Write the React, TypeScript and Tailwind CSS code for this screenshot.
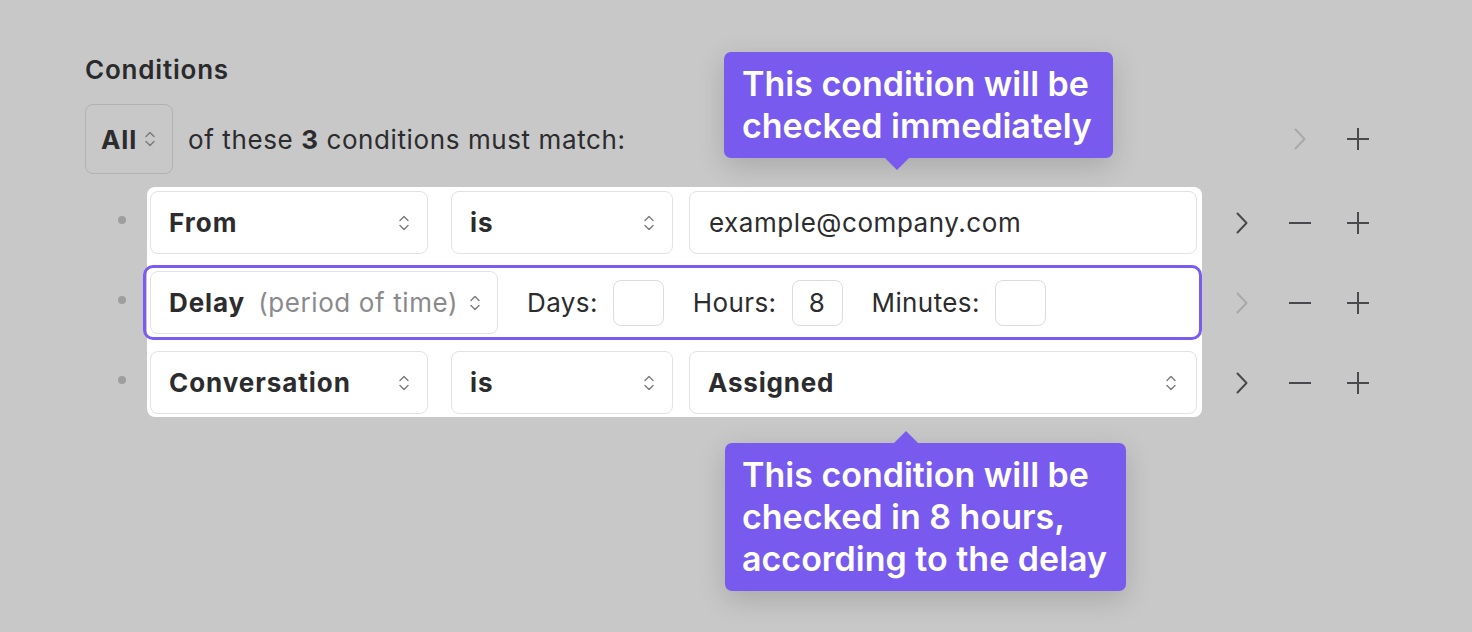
import React from "react";

const UpDown = ({ className = "" }: { className?: string }) => (
  <svg width="12" height="20" viewBox="0 0 12 20" className={className} fill="none" stroke="#7a7a7a" strokeWidth="1.4" strokeLinecap="round" strokeLinejoin="round">
    <path d="M2 7.5 L6 3.5 L10 7.5" />
    <path d="M2 12.5 L6 16.5 L10 12.5" />
  </svg>
);

const Chevron = ({ light = false }: { light?: boolean }) => (
  <svg width="12" height="22" viewBox="0 0 12 22" fill="none" stroke={light ? "#a9a9a9" : "#4a4a4c"} strokeWidth="2" strokeLinecap="round" strokeLinejoin="round">
    <path d="M1.5 1.5 L10.5 11 L1.5 20.5" />
  </svg>
);

const Minus = () => (
  <svg width="24" height="24" viewBox="0 0 24 24" fill="none" stroke="#4a4a4c" strokeWidth="2">
    <path d="M1 12 H23" />
  </svg>
);

const Plus = () => (
  <svg width="24" height="24" viewBox="0 0 24 24" fill="none" stroke="#4a4a4c" strokeWidth="2">
    <path d="M1 12 H23 M12 1 V23" />
  </svg>
);

const Select = ({ w, children, pr = "pr-[17px]" }: { w: string; children: React.ReactNode; pr?: string }) => (
  <div className={`${w} h-[63px] shrink-0 rounded-[8px] border-[1.5px] border-[#e2e2e2] bg-white flex items-center pl-[18px] ${pr}`}>
    <div className="flex-1 flex items-center text-[26px] text-[#2c2c2e] whitespace-nowrap">{children}</div>
    <UpDown />
  </div>
);

const SmallBox = ({ v = "" }: { v?: string }) => (
  <div className="w-[51px] h-[46px] rounded-[8px] border-[1.5px] border-[#dcdcdc] bg-white flex items-center justify-center text-[26px] text-[#2c2c2e]">
    {v}
  </div>
);

const IconCell = ({ children }: { children?: React.ReactNode }) => (
  <div className="w-[58px] flex items-center justify-center">{children}</div>
);

const Bullet = () => <div className="w-[8px] h-[8px] rounded-full bg-[#9e9e9e] -mt-[6px]" />;

export default function App() {
  return (
    <div
      className="relative w-full h-[632px] bg-[#c8c8c8] overflow-hidden"
      style={{ fontFamily: "Inter, 'Noto Sans', sans-serif" }}
    >
      <div className="pl-[85px] pt-[55px] w-[1387px]">
        <div className="text-[26px] leading-[30px] font-semibold tracking-[0.8px] text-[#2a2a2c]">Conditions</div>

        <div className="mt-[19px] flex items-center h-[70px]">
          <div className="h-[70px] w-[88px] rounded-[8px] border-[1.5px] border-[#b2b2b2] flex items-center pl-[15px] gap-[7px]">
            <span className="text-[26px] font-bold tracking-[0.9px] text-[#2c2c2e]">All</span>
            <UpDown />
          </div>
          <div className="ml-[15px] text-[26px] tracking-[0.6px] text-[#2c2c2e]">
            of these <span className="font-bold">3</span> conditions must match:
          </div>
          <div className="flex-1" />
          <div className="flex">
            <IconCell />
            <IconCell>
              <Chevron light />
            </IconCell>
            <IconCell>
              <Plus />
            </IconCell>
          </div>
        </div>

        <div className="mt-[13px] flex">
          {/* bullets */}
          <div className="w-[62px] flex flex-col pt-[4px]">
            <div className="h-[63px] flex items-center pl-[33px]">
              <Bullet />
            </div>
            <div className="h-[75px] mt-[11px] flex items-center pl-[33px]">
              <Bullet />
            </div>
            <div className="h-[63px] mt-[11px] flex items-center pl-[33px]">
              <Bullet />
            </div>
          </div>

          {/* panel */}
          <div className="w-[1055px] bg-white rounded-[8px] pl-[3px] pr-[5px] pt-[4px] pb-[3px] flex flex-col">
            <div className="flex items-center h-[63px]">
              <Select w="w-[278px]">
                <span className="font-bold tracking-[1px]">From</span>
              </Select>
              <div className="ml-[23px]">
                <Select w="w-[222px]">
                  <span className="font-bold tracking-[1px]">is</span>
                </Select>
              </div>
              <div className="ml-[16px] w-[508px] h-[63px] rounded-[8px] border-[1.5px] border-[#e2e2e2] bg-white flex items-center pl-[19px] text-[26px] tracking-[0.55px] text-[#2c2c2e]">
                example@company.com
              </div>
            </div>

            <div className="mt-[11px] h-[75px] -ml-[7px] -mr-[5px] rounded-[10px] border-[3px] border-[#7a5cf0] flex items-center pl-[4px]">
              <Select w="w-[348px]" pr="pr-[16px]">
                <span className="font-bold tracking-[0.9px]">Delay</span>
                <span className="ml-[13px] tracking-[0.6px] text-[#8a8a8c]">(period of time)</span>
              </Select>
              <div className="ml-[29px] flex items-center gap-[15px] text-[26px] tracking-[0.4px] text-[#2c2c2e]">
                <span>Days:</span>
                <SmallBox />
              </div>
              <div className="ml-[29px] flex items-center gap-[15px] text-[26px] tracking-[0.4px] text-[#2c2c2e]">
                <span>Hours:</span>
                <SmallBox v="8" />
              </div>
              <div className="ml-[29px] flex items-center gap-[15px] text-[26px] tracking-[0.4px] text-[#2c2c2e]">
                <span>Minutes:</span>
                <SmallBox />
              </div>
            </div>

            <div className="mt-[11px] flex items-center h-[63px]">
              <Select w="w-[278px]">
                <span className="font-bold tracking-[0.95px]">Conversation</span>
              </Select>
              <div className="ml-[23px]">
                <Select w="w-[222px]">
                  <span className="font-bold tracking-[1px]">is</span>
                </Select>
              </div>
              <div className="ml-[16px]">
                <Select w="w-[508px]" pr="pr-[19px]">
                  <span className="font-bold tracking-[0.8px]">Assigned</span>
                </Select>
              </div>
            </div>
          </div>

          {/* icons */}
          <div className="ml-[11px] flex flex-col pt-[4px]">
            <div className="h-[63px] flex items-center">
              <IconCell><Chevron /></IconCell>
              <IconCell><Minus /></IconCell>
              <IconCell><Plus /></IconCell>
            </div>
            <div className="h-[75px] mt-[11px] flex items-center">
              <IconCell><Chevron light /></IconCell>
              <IconCell><Minus /></IconCell>
              <IconCell><Plus /></IconCell>
            </div>
            <div className="h-[63px] mt-[11px] flex items-center">
              <IconCell><Chevron /></IconCell>
              <IconCell><Minus /></IconCell>
              <IconCell><Plus /></IconCell>
            </div>
          </div>
        </div>
      </div>

      {/* tooltip 1 */}
      <div className="absolute left-[724px] top-[52px] w-[389px] h-[106px] rounded-[7px] bg-[#785aef] shadow-[0_8px_28px_rgba(0,0,0,0.16)] pl-[18px] pt-[11px] text-white text-[34px] leading-[42px] font-semibold">
        This condition will be
        <br />
        checked immediately
        <div className="absolute left-[161px] top-[106px] w-0 h-0 border-l-[12px] border-r-[12px] border-t-[12px] border-l-transparent border-r-transparent border-t-[#785aef]" />
      </div>

      {/* tooltip 2 */}
      <div className="absolute left-[725px] top-[443px] w-[401px] h-[148px] rounded-[7px] bg-[#785aef] shadow-[0_8px_28px_rgba(0,0,0,0.16)] pl-[17px] pt-[11px] text-white text-[34px] leading-[42px] font-semibold">
        This condition will be
        <br />
        checked in 8 hours,
        <br />
        according to the delay
        <div className="absolute left-[169px] -top-[12px] w-0 h-0 border-l-[12px] border-r-[12px] border-b-[12px] border-l-transparent border-r-transparent border-b-[#785aef]" />
      </div>
    </div>
  );
}
